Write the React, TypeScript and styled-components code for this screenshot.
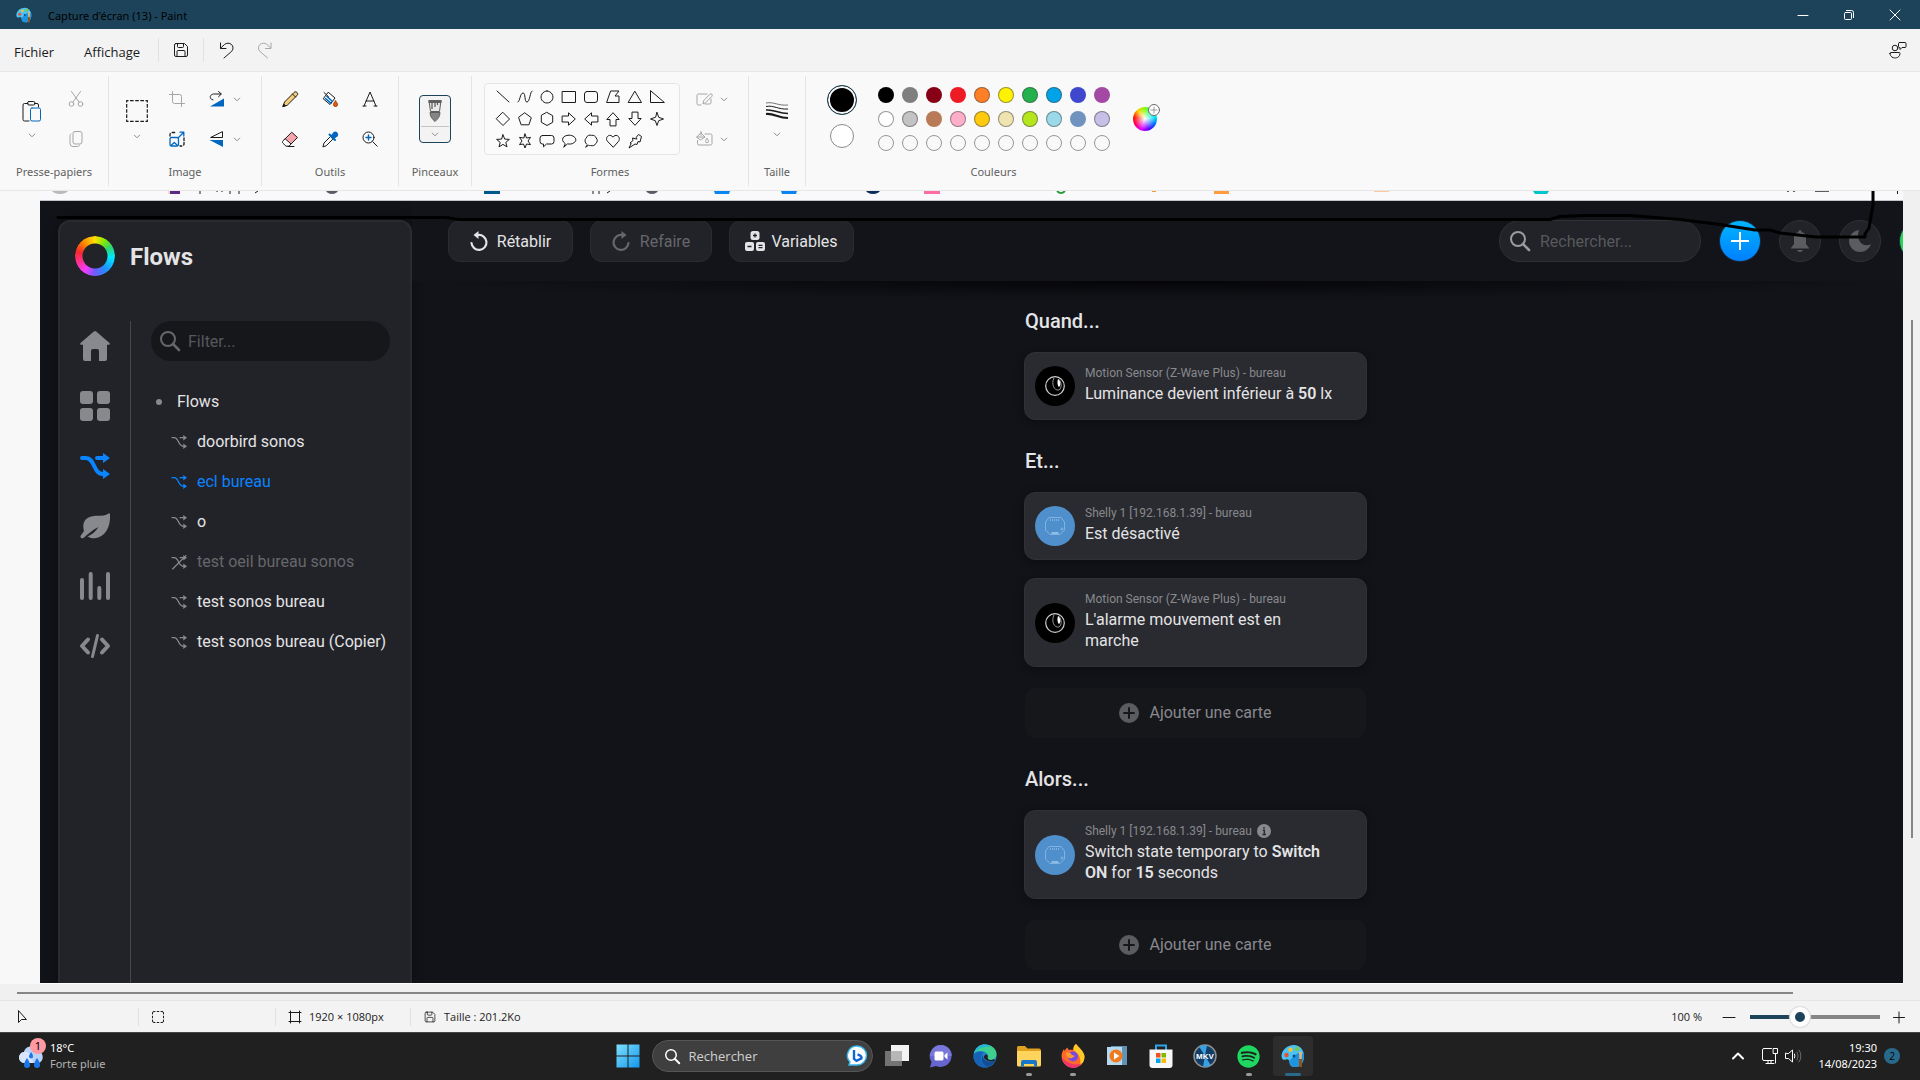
import React from 'react';
import styled, { createGlobalStyle, css } from 'styled-components';
import { FaSpotify } from 'react-icons/fa6';

const GlobalStyle = createGlobalStyle`
  *, *::before, *::after { box-sizing: border-box; }
  body { margin: 0; background: #202020; }
  button, input { font: inherit; color: inherit; }
  h1, h2, p, ul { margin: 0; padding: 0; }
  ul { list-style: none; }
`;

const segoe = "'Open Sans', 'Noto Sans', sans-serif";
const segoeSmall = "'Noto Sans', 'Open Sans', sans-serif";
const homey = "Roboto, 'Liberation Sans', sans-serif";

const bare = css`
  padding: 0;
  border: 0;
  background: none;
  display: flex;
  align-items: center;
  justify-content: center;
  flex: none;
`;

const Screen = styled.div`
  height: 100vh;
  display: flex;
  flex-direction: column;
  overflow: hidden;
  font: 12px/16px ${segoe};
  color: #1b1b1b;
  svg { display: block; flex: none; overflow: visible; }
`;

/* ---------- Window chrome ---------- */

const TitleBar = styled.header`
  flex: none;
  height: 29px;
  display: flex;
  align-items: center;
  gap: 16px;
  padding: 0 2px 0 16px;
  background: #1c4359;
  color: #000;
`;
const WindowTitle = styled.h1`
  flex: 1;
  font: 400 11px/16px ${segoeSmall};
  padding-top: 3px;
`;
const CaptionGroup = styled.div`
  display: flex;
`;
const CaptionButton = styled.button`
  ${bare}
  width: 46px;
  height: 28px;
  color: #fff;
`;
const MenuBar = styled.nav`
  flex: none;
  height: 43px;
  display: flex;
  align-items: center;
  padding-left: 2px;
  background: #f3f3f3;
  border-bottom: 1px solid #e7e7e7;
`;
const MenuItem = styled.button<{ $w: number }>`
  ${bare}
  width: ${p => p.$w}px;
  height: 32px;
  padding-top: 3px;
  font-size: 13px;
  margin-right: 4px;
`;
const MenuSep = styled.span`
  width: 1px;
  height: 24px;
  background: #e1e1e1;
`;
const MenuIcon = styled.button<{ $dim?: boolean }>`
  ${bare}
  width: ${p => (p.$dim ? 32 : 44)}px;
  height: 32px;
  color: ${p => (p.$dim ? '#a8a8a8' : '#1b1b1b')};
`;
const Spacer = styled.span`
  flex: 1;
`;

/* ---------- Ribbon ---------- */

const Ribbon = styled.div`
  flex: none;
  display: flex;
  height: 119px;
  padding: 4px 0;
  background: #f9f9f9;
  border-bottom: 1px solid #e7e7e7;
`;
const Group = styled.section<{ $w: number; $last?: boolean }>`
  width: ${p => p.$w}px;
  padding-top: 3px;
  display: flex;
  flex-direction: column;
  border-right: ${p => (p.$last ? 0 : 1)}px solid #e4e4e4;
`;
const GroupBody = styled.div<{ $pad: number; $gap?: number }>`
  height: 80px;
  display: flex;
  align-items: center;
  gap: ${p => p.$gap ?? 0}px;
  padding-left: ${p => p.$pad}px;
`;
const GroupLabel = styled.p`
  padding-top: 5px;
  text-align: center;
  font: 11px/16px ${segoeSmall};
  color: #5f5f5f;
`;
const TallButton = styled.button`
  ${bare}
  flex-direction: column;
  gap: 12px;
  width: 40px;
  height: 80px;
`;
const Cells = styled.div<{ $cols: number }>`
  display: grid;
  grid-template-columns: repeat(${p => p.$cols}, 40px);
  grid-auto-rows: 40px;
`;
const CellButton = styled.button<{ $dim?: boolean }>`
  ${bare}
  color: ${p => (p.$dim ? '#a5a5a5' : '#1b1b1b')};
`;
const SplitStack = styled.div`
  width: 56px;
  display: grid;
  grid-auto-rows: 40px;
`;
const SplitButton = styled(CellButton)`
  gap: 8px;
`;
const BrushButton = styled.button`
  ${bare}
  flex-direction: column;
  justify-content: space-between;
  width: 32px;
  height: 48px;
  margin: auto;
  border: 1px solid #1c4359;
  border-radius: 4px;
  background: #f3f3f3;
`;
const BrushTop = styled.span`
  height: 31px;
  width: 28px;
  display: flex;
  align-items: center;
  justify-content: center;
  border-bottom: 1px solid #c4c4c4;
`;
const BrushBottom = styled.span`
  height: 15px;
  display: flex;
  align-items: center;
`;
const Gallery = styled.div`
  display: grid;
  grid-template-columns: repeat(8, 22px);
  grid-auto-rows: 22px;
  padding: 2px 7px;
  width: 196px;
  flex: none;
  border: 1px solid #e5e5e5;
  border-radius: 4px;
  background: #fbfbfb;
`;
const ShapeButton = styled.button`
  ${bare}
`;
const ActiveColours = styled.div`
  width: 44px;
  display: flex;
  flex-direction: column;
  align-items: center;
  gap: 9px;
  padding-bottom: 5px;
`;
const ActiveColour = styled.button<{ $color: string; $on?: boolean }>`
  padding: 0;
  width: ${p => (p.$on ? 30 : 24)}px;
  height: ${p => (p.$on ? 30 : 24)}px;
  border-radius: 50%;
  background: ${p => p.$color};
  border: 1px solid ${p => (p.$on ? '#1c4359' : '#8a8a8a')};
  box-shadow: ${p => (p.$on ? 'inset 0 0 0 2px #f9f9f9' : 'none')};
`;
const Palette = styled.div`
  display: grid;
  grid-template-columns: repeat(10, 24px);
  grid-auto-rows: 24px;
  place-items: center;
`;
const Swatch = styled.button<{ $color?: string; $ring?: boolean }>`
  padding: 0;
  width: 16px;
  height: 16px;
  border-radius: 50%;
  background: ${p => p.$color ?? 'transparent'};
  border: 1px solid ${p => (p.$ring ? 'rgba(70, 70, 70, 0.55)' : 'transparent')};
`;
const WheelSlot = styled.span`
  width: 42px;
  display: flex;
  justify-content: center;
`;
const WheelButton = styled.button`
  position: relative;
  padding: 0;
  border: 0;
  width: 24px;
  height: 24px;
  border-radius: 50%;
  background:
    radial-gradient(circle, #fff 0, rgba(255, 255, 255, 0) 62%),
    conic-gradient(#7cff00, #00ff80, #00e5ff, #0066ff, #5a00ff, #e600ff, #ff0066, #ff1a00, #ffd000, #7cff00);
`;
const WheelPlus = styled.span`
  position: absolute;
  top: -3px;
  right: -3px;
`;

/* ---------- Workspace ---------- */

const Workspace = styled.main`
  flex: 1;
  min-height: 0;
  display: flex;
  background: #f8f8f8;
  padding-left: 40px;
`;
const Canvas = styled.div`
  position: relative;
  flex: 1;
  min-width: 0;
  overflow: hidden;
  display: flex;
  flex-direction: column;
  background: #121318;
  border-bottom: 1px solid #fff;
  font-family: ${homey};
  color: #e4e4e6;
`;
const VScroll = styled.div`
  width: 17px;
  background: #f0f0f0;
  display: flex;
  justify-content: center;
  padding: 129px 0 146px;
`;
const VThumb = styled.span`
  width: 2px;
  background: #868686;
`;
const TabStrip = styled.div`
  flex: none;
  height: 10px;
  background: #f9f9fb;
  border-bottom: 1px solid #c4c4c8;
`;
const StrokeLayer = styled.svg`
  position: absolute;
  top: 0;
  left: 0;
  width: 100%;
  height: 60px;
  pointer-events: none;
  z-index: 3;
`;
const FlowApp = styled.div`
  flex: 1;
  min-height: 0;
  display: flex;
  padding-left: 18px;
`;

const Sidebar = styled.aside`
  width: 354px;
  flex: none;
  margin-top: 19px;
  display: flex;
  flex-direction: column;
  background: #222328;
  border: 2px solid #2a2b30;
  border-bottom: 0;
  border-radius: 12px 12px 0 0;
  box-shadow: 0 0 12px rgba(0, 0, 0, 0.4);
`;
const Brand = styled.div`
  height: 99px;
  padding: 14px 0 0 15px;
  display: flex;
  gap: 15px;
`;
const BrandName = styled.h2`
  padding-top: 1px;
  font-size: 24px;
  line-height: 40px;
  font-weight: 700;
`;
const Ring = styled.span`
  width: 40px;
  height: 40px;
  border-radius: 50%;
  background: conic-gradient(#ffe000, #8be800 30deg, #2fd66a 60deg, #00eaff 95deg, #1e90ff 140deg, #6f5bff 180deg, #f23cff 215deg, #ff2f7d 255deg, #f52a2a 285deg, #ff8a00 320deg, #ffe000);
  mask: radial-gradient(circle, transparent 12px, #000 13px);
`;
const SideBody = styled.div`
  flex: 1;
  display: flex;
`;
const Rail = styled.nav`
  flex: none;
  width: 71px;
  display: flex;
  flex-direction: column;
  gap: 10px;
  border-right: 1px solid #47484c;
`;
const RailLink = styled.a<{ $on?: boolean }>`
  height: 50px;
  display: flex;
  align-items: center;
  justify-content: center;
  color: ${p => (p.$on ? '#0a84ff' : '#88898d')};
`;
const SideList = styled.div`
  flex: 1;
  min-width: 0;
  padding: 0 20px;
`;
const SearchField = styled.label<{ $dark?: boolean }>`
  display: flex;
  align-items: center;
  gap: ${p => (p.$dark ? 8 : 10)}px;
  height: ${p => (p.$dark ? 40 : 42)}px;
  width: ${p => (p.$dark ? 'auto' : '202px')};
  padding: 0 ${p => (p.$dark ? 9 : 10)}px;
  border-radius: 21px;
  background: ${p => (p.$dark ? '#16171b' : '#222328')};
  border: ${p => (p.$dark ? 0 : 1)}px solid #303136;
  color: ${p => (p.$dark ? '#66676b' : '#9a9b9e')};
`;
const SearchInput = styled.input`
  flex: 1;
  min-width: 0;
  padding: 2px 0 0;
  border: 0;
  outline: 0;
  background: none;
  font-size: 16px;
  line-height: 20px;
  color: #e4e4e6;
  &::placeholder { color: #57585c; opacity: 1; }
`;
const FlowRow = styled.a<{ $tone?: 'on' | 'off' | 'root' }>`
  display: flex;
  align-items: center;
  gap: ${p => (p.$tone === 'root' ? 15 : 10)}px;
  height: 40px;
  padding: 2px 0 0 ${p => (p.$tone === 'root' ? 5 : 20)}px;
  font-size: 16px;
  line-height: 20px;
  white-space: nowrap;
  text-decoration: none;
  color: ${p => (p.$tone === 'on' ? '#0a84ff' : p.$tone === 'off' ? '#66676b' : '#e4e4e6')};
  svg { color: ${p => (p.$tone === 'on' ? '#0a84ff' : '#88898d')}; }
`;
const Bullet = styled.span`
  width: 6px;
  height: 6px;
  border-radius: 50%;
  background: #88898d;
`;
const FlowRows = styled.ul`
  padding-top: 20px;
`;

const Main = styled.div`
  flex: 1;
  min-width: 0;
  display: flex;
  flex-direction: column;
  overflow: hidden;
`;
const Toolbar = styled.div`
  flex: none;
  height: 80px;
  padding: 19px 0 0 36px;
  display: flex;
  align-items: flex-start;
  gap: 17px;
  background: #13141a;
`;
const ToolButton = styled.button<{ $w: number; $gap: number; $dim?: boolean }>`
  ${bare}
  gap: ${p => p.$gap}px;
  width: ${p => p.$w}px;
  height: 42px;
  border: 1px solid #2b2c31;
  border-radius: 12px;
  background: #222328;
  font-size: 16px;
  line-height: 20px;
  color: ${p => (p.$dim ? '#66676b' : '#e4e4e6')};
`;
const ToolText = styled.span`
  padding-top: 2px;
`;
const ToolRight = styled.div`
  margin: 0 -38px 0 auto;
  flex: none;
  display: flex;
  gap: 18px;
`;
const RoundButton = styled.button<{ $kind?: 'add' | 'user' }>`
  ${bare}
  width: 42px;
  height: 42px;
  border-radius: 50%;
  border: 1px solid ${p => (p.$kind ? '#1a2c40' : '#303136')};
  background: ${p =>
    p.$kind === 'add' ? 'linear-gradient(#00b4ff, #0080ff)' : p.$kind === 'user' ? '#2bd45b' : '#222328'};
  color: ${p => (p.$kind ? '#fff' : '#5b5c60')};
`;
const Editor = styled.div`
  flex: 1;
  display: flex;
  justify-content: center;
  padding: 28px 0 0 76px;
  background: radial-gradient(ellipse 50% 18px at 50% 0, #050507 0, #0c0d11 55%, rgba(18, 19, 24, 0) 100%) no-repeat;
`;
const Column = styled.div`
  width: 343px;
  display: flex;
  flex-direction: column;
  gap: 29px;
`;
const StepTitle = styled.h2`
  padding-left: 1px;
  margin-bottom: 19px;
  font-size: 20px;
  line-height: 24px;
  font-weight: 500;
`;
const CardStack = styled.div`
  display: flex;
  flex-direction: column;
  gap: 18px;
`;
const Card = styled.article`
  display: flex;
  align-items: center;
  gap: 10px;
  padding: 0 30px 0 10px;
  border: 1px solid #303136;
  border-radius: 11px;
  background: #2a2b30;
  box-shadow: 0 2px 8px rgba(0, 0, 0, 0.35);
`;
const CardBody = styled.div`
  padding: 12px 0 15px;
`;
const Device = styled.span<{ $blue?: boolean }>`
  flex: none;
  width: 40px;
  height: 40px;
  border-radius: 50%;
  display: flex;
  align-items: center;
  justify-content: center;
  background: ${p => (p.$blue ? '#4f8fcb' : '#000')};
`;
const CardMeta = styled.p`
  display: flex;
  align-items: center;
  gap: 5px;
  height: 16px;
  font-size: 12px;
  color: #88898d;
`;
const CardText = styled.p`
  margin-top: 2px;
  font-size: 16px;
  line-height: 21px;
  b { font-weight: 600; }
`;
const AddCard = styled.button`
  ${bare}
  gap: 10px;
  width: 341px;
  height: 50px;
  margin: 3px auto 0;
  border-radius: 10px;
  background: #16171b;
  font-size: 16px;
  color: #88898d;
`;

/* ---------- Bottom bars ---------- */

const HScroll = styled.div`
  flex: none;
  height: 17px;
  padding: 8px 127px 0 17px;
  background: #f0f0f0;
  border-bottom: 1px solid #e6e6e6;
`;
const HThumb = styled.div`
  height: 2px;
  background: #868686;
`;
const StatusBar = styled.footer`
  flex: none;
  height: 31px;
  display: flex;
  align-items: center;
  padding-top: 1px;
  background: #f3f3f3;
  font-size: 11px;
`;
const StatusCell = styled.div<{ $w: number; $last?: boolean }>`
  width: ${p => p.$w}px;
  height: 18px;
  display: flex;
  align-items: center;
  gap: 8px;
  padding-left: 13px;
  border-right: ${p => (p.$last ? 0 : 1)}px solid #e1e1e1;
`;
const ZoomBox = styled.div`
  margin-left: auto;
  display: flex;
  align-items: center;
  padding-right: 6px;
`;
const ZoomButton = styled.button`
  ${bare}
  width: 30px;
  height: 24px;
`;
const ZoomLabel = styled.label`
  margin-right: 12px;
`;
const ZoomSlider = styled.input`
  appearance: none;
  width: 130px;
  height: 20px;
  margin: 0 4px 0 6px;
  background: linear-gradient(90deg, #1c4359 38%, #868686 38%) center / 100% 4px no-repeat;
  &::-webkit-slider-thumb {
    appearance: none;
    width: 20px;
    height: 20px;
    border-radius: 50%;
    border: 5px solid #fff;
    background: #1c4359;
    box-shadow: 0 0 1px 1px #dcdcdc;
  }
`;
const Taskbar = styled.footer`
  flex: none;
  height: 48px;
  display: grid;
  grid-template-columns: 1fr auto 1fr;
  align-items: center;
  background: #202020;
  box-shadow: inset 0 1px 0 #454545;
  color: #fff;
`;
const Weather = styled.button`
  ${bare}
  justify-self: start;
  gap: 7px;
  margin-left: 19px;
  text-align: left;
  font: 11px/16px ${segoeSmall};
`;
const WeatherPic = styled.span`
  position: relative;
`;
const WeatherBadge = styled.span`
  position: absolute;
  top: -5px;
  right: -3px;
  width: 16px;
  height: 16px;
  border-radius: 50%;
  background: #ff99a4;
  color: #000;
  text-align: center;
`;
const Line = styled.span<{ $faint?: boolean }>`
  display: block;
  color: ${p => (p.$faint ? '#b4b4b4' : '#fff')};
`;
const Dock = styled.div`
  display: flex;
  align-items: center;
  gap: 4px;
`;
const DockButton = styled.button<{ $on?: boolean; $dot?: boolean }>`
  ${bare}
  position: relative;
  width: 40px;
  height: 40px;
  border-radius: 4px;
  background: ${p => (p.$on ? '#2d2d2d' : 'none')};
  &::after {
    content: '';
    position: absolute;
    bottom: 0;
    left: 50%;
    transform: translateX(-50%);
    width: ${p => (p.$on ? 16 : 6)}px;
    height: 3px;
    border-radius: 2px;
    background: ${p => (p.$on ? '#286a8c' : p.$dot ? '#9a9a9a' : 'none')};
  }
`;
const DockSearch = styled.label`
  width: 221px;
  height: 32px;
  display: flex;
  align-items: center;
  gap: 9px;
  padding: 0 5px 0 12px;
  border: 1px solid #565656;
  border-radius: 16px;
  background: #3f3f3f;
`;
const DockInput = styled.input`
  flex: 1;
  min-width: 0;
  padding: 0;
  border: 0;
  outline: 0;
  background: none;
  font-size: 13px;
  &::placeholder { color: #d0d0d0; opacity: 1; }
`;
const Tray = styled.div`
  justify-self: end;
  display: flex;
  align-items: center;
  padding-right: 20px;
`;
const TrayButton = styled.button<{ $w: number }>`
  ${bare}
  width: ${p => p.$w}px;
  height: 40px;
`;
const Clock = styled.button`
  ${bare}
  display: block;
  margin: 0 7px 0 14px;
  font: 11px/16px ${segoeSmall};
  text-align: right;
`;
const Badge = styled.span`
  width: 16px;
  height: 16px;
  border-radius: 50%;
  background: #286a8c;
  color: #000;
  font-size: 10px;
  text-align: center;
`;

/* ---------- Drawings ---------- */

type IconProps = { s?: number; box?: number; sw?: number; color?: string; fill?: string; children: React.ReactNode };
const Svg = ({ s = 16, box, sw = 1, color = 'currentColor', fill = 'none', children }: IconProps) => (
  <svg width={s} height={s} viewBox={`0 0 ${box ?? s} ${box ?? s}`} fill={fill} stroke={color} strokeWidth={sw} strokeLinecap="round" strokeLinejoin="round" aria-hidden="true">
    {children}
  </svg>
);

const Chevron = () => (
  <svg width="8" height="5" viewBox="0 0 8 5" fill="none" stroke="#8c8c8c" aria-hidden="true"><path d="M1 .8 4 3.800 7 .8" /></svg>
);
const SaveIcon = ({ s = 16 }: { s?: number }) => (
  <Svg s={s} box={16}><path d="M3 1.500h8.500l3 3V13a1.500 1.500 0 0 1-1.500 1.500H3A1.500 1.500 0 0 1 1.500 13V3A1.500 1.500 0 0 1 3 1.500ZM4.500 1.500v3A1 1 0 0 0 5.500 5.500h4a1 1 0 0 0 1-1v-3M4 14.500V9.500A1 1 0 0 1 5 8.500h6a1 1 0 0 1 1 1v5" /></Svg>
);
const UndoIcon = () => (
  <Svg><path d="M2.500 1v5.500H8M2.800 6 6.500 2.500c2-1.700 5-1.800 7 0s2 5 .1 6.900L6 16" /></Svg>
);
const RedoIcon = () => (
  <Svg><path d="M15 1v5.500H9.500M14.700 6 11 2.500c-2-1.700-5-1.800-7 0s-2 5-.1 6.900L11.500 16" /></Svg>
);
const PaintLogo = ({ s = 16 }: { s?: number }) => (
  <svg width={s} height={s} viewBox="0 0 24 24" aria-hidden="true">
    <path d="M13 1C6 1 .5 6.500.5 12c0 3.500 2.500 4.500 4.500 3.500s3.500.5 3.500 2.500c0 3 2 5 5.500 5 6 0 9-5 9-11S19 1 13 1Z" fill="#4cc3f7" />
    <path d="M8.500 18c0-3 2-3 3.500-5s5-6 11-3c.5 8-4 13-9 13-3.500 0-5.500-2-5.500-5Z" fill="#1f93e0" />
    <circle cx="5.500" cy="11" r="2.200" fill="#e8502f" /><circle cx="9.500" cy="5.800" r="2.200" fill="#f6c02d" />
    <circle cx="16" cy="5" r="2.200" fill="#7ac943" /><circle cx="13" cy="12" r="1.500" fill="#0b4f86" />
    <path d="M18 8h3l-.4 7h-2.200Z" fill="#e9b872" /><path d="M18 15h3v8h-3Z" fill="#8b5522" />
  </svg>
);
const MagnifierIcon = ({ s = 20, sw = 2 }: { s?: number; sw?: number }) => (
  <Svg s={s} box={20} sw={sw}><circle cx="8" cy="8" r="7" /><path d="m13 13 6 6" strokeWidth={sw * 1.3} /></Svg>
);

const PasteIcon = () => (
  <Svg s={20}><path d="M6 2.500H2.500A1.500 1.500 0 0 0 1 4v14.500A1.500 1.500 0 0 0 2.500 20H7M12.500 2.500H15A1.500 1.500 0 0 1 16.500 4V6" /><rect x="5.500" y=".5" width="7.500" height="3.500" rx="1.500" /><rect x="8.500" y="7" width="10" height="13" rx="1.500" stroke="#0067c0" fill="#f9f9f9" /></Svg>
);
const CutIcon = () => (
  <Svg><circle cx="3.500" cy="13" r="2.300" /><circle cx="12.500" cy="13" r="2.300" /><path d="M3.500.5 11 11M12.500.5 5 11" /></Svg>
);
const CopyIcon = () => (
  <Svg><rect x="5" y=".5" width="9" height="12.500" rx="2" /><path d="M3 3C2 3.500 2 4 2 5v7.500a3 3 0 0 0 3 3h4.500c1 0 1.500 0 2-1" /></Svg>
);
const SelectIcon = () => (
  <svg width="22" height="22" viewBox="0 0 22 22" fill="none" stroke="#1b1b1b" strokeWidth="1.200" aria-hidden="true"><rect x=".7" y=".7" width="20.600" height="20.600" strokeDasharray="3.600 1.550" strokeDashoffset="1.800" /></svg>
);
const SmallSelectIcon = () => (
  <Svg s={12}><path d="M.5 3V2A1.500 1.500 0 0 1 2 .5h1M9 .5h1A1.500 1.500 0 0 1 11.500 2v1M11.500 9v1a1.500 1.500 0 0 1-1.500 1.500H9M3 11.500H2A1.500 1.500 0 0 1 .5 10V9M5.200.5h1.600M5.200 11.500h1.600M.5 5.200v1.600M11.500 5.200v1.600" /></Svg>
);
const CropIcon = () => (
  <Svg><path d="M.5 3.500h10a2 2 0 0 1 2 2v10M3.500.5v10a2 2 0 0 0 2 2h10" /></Svg>
);
const ResizeIcon = () => (
  <Svg><path d="M1 5V3.500A2 2 0 0 1 3 1.500h3M15 7v6a2 2 0 0 1-2 2h-2" strokeDasharray="2.500 2" strokeWidth="1.300" /><rect x="1" y="6.500" width="8.500" height="8.500" rx="1.500" stroke="#0067c0" strokeWidth="1.300" /><path d="m2 14.500 3.300-3 3.300 3M9.500 6.500l5-5M11 1.200h3.800V5" stroke="#0067c0" strokeWidth="1.300" /></Svg>
);
const RotateIcon = () => (
  <Svg><path d="M9.500.5 12.300 3 9.500 5.800M12 3H5.500C2 3 1 5 1.300 6.500c.2 1.500 1.200 2 2.700 2.300" /><path d="M15 7.500V15.500H1Z" fill="#0067c0" stroke="none" /></Svg>
);
const FlipIcon = () => (
  <Svg><path d="M13.500 1v5.500H2Z" /><path d="M14 9v7L.5 9Z" fill="#0067c0" stroke="none" /></Svg>
);
const PencilIcon = () => (
  <Svg><path d="M1 15.300 2.500 11 12 1.500c1-1 2-1 3 0s1 2 0 3L5.500 14Z" fill="#f2cd7c" /><path d="m10.500 3 3 3" /><path d="m1 15.300.8-2.300 1.500 1.500Z" fill="#1b1b1b" /></Svg>
);
const BucketIcon = () => (
  <Svg><path d="M6.500 1.500 13 7l-5 6.500L1.500 8Z" fill="#fff" /><path d="m5 5.500 5.500 5M3.500 7.500 9 12.300" stroke="#0067c0" strokeWidth="1.600" /><path d="m2 1.500 4.500 4.200" /><path d="M13.500 10c1.200 1.500 2 2.400 2 3.500a2 2 0 0 1-4 0c0-1.100.8-2 2-3.500Z" fill="#e8590c" stroke="#a33a00" /></Svg>
);
const TextIcon = () => (
  <Svg><path d="M2 15 8 1l6 14M4 10h8M1 15h3M12 15h3" /></Svg>
);
const EraserIcon = () => (
  <Svg><path d="M10 1.500 15.500 6.500 8.500 13.500 3 8.500Z" fill="#f7a5ac" /><path d="m3.500 8 5.500 5-2 2.200H4L.8 12c-.5-.7-.4-1.400 0-2Z" fill="#fff" /><path d="M6 15.500h6" /></Svg>
);
const DropperIcon = () => (
  <Svg><path d="M1 15.500 2 12l6.500-6.500 2.500 2.500L4.500 14.500Z" /><path d="m7.500 3.500 5.500 5.500M9.500 5.500 12 2a2 2 0 0 1 2.800 2.800L11 7.500Z" fill="#0067c0" stroke="#0067c0" strokeWidth="2" /></Svg>
);
const ZoomInIcon = () => (
  <Svg><circle cx="6.500" cy="6.500" r="5.500" /><path d="m10.700 10.700 4.500 4.500" /><path d="M6.500 4v5M4 6.500h5" stroke="#0067c0" strokeWidth="1.400" /></Svg>
);
const BrushIcon = () => (
  <svg width="16" height="24" viewBox="0 0 16 24" aria-hidden="true">
    <path d="M2 1.500h12l-1.500 11h-9Z" fill="#e9e9e9" stroke="#5e5e5e" /><path d="M1.500 1h13v3h-13Z" fill="#5e5e5e" /><path d="M5 4v6M8 4v4M10.500 4v2" stroke="#5e5e5e" strokeWidth="1.300" />
    <path d="M3 13.500h10c0 4.500-2.500 6.500-5 9-2.500-2.500-5-4.500-5-9Z" fill="#858585" stroke="#5e5e5e" />
  </svg>
);
const SizeIcon = () => (
  <svg width="22" height="18" viewBox="0 0 22 18" fill="none" stroke="#1b1b1b" aria-hidden="true">
    <path d="M0 1c8-1.500 12 3 22 2" strokeWidth=".6" /><path d="M0 4.500c8-1.500 12 3.200 22 2.500" strokeWidth="1" /><path d="M0 8c8-1 12 3.500 22 3.500" strokeWidth="1.500" /><path d="M0 12c8-1 12 4 22 4" strokeWidth="2.200" />
  </svg>
);
const OutlineIcon = () => (
  <Svg><path d="M11 3H2.500A1.500 1.500 0 0 0 1 4.500v8A1.500 1.500 0 0 0 2.500 14H5M9 13h4.500a1.500 1.500 0 0 0 1.500-1.500V8M7 12.500l.8-3L14 3.200c1.500-1 3 .5 2 2L9.800 11.500Z" /></Svg>
);
const FillIcon = () => (
  <Svg><path d="M1.500 9.500v3A1.500 1.500 0 0 0 3 14h11.500a1.500 1.500 0 0 0 1.500-1.500v-8A1.500 1.500 0 0 0 14.500 3H9M5 2l4 4-4.500 3L1 6.500ZM5 .5v4M1 6h7.500M11 7.500c1 1.200 1.500 2 1.500 2.700a1.500 1.500 0 0 1-3 0c0-.7.500-1.500 1.500-2.700Z" /></Svg>
);

const shapes: [string, string][] = [
  ['Ligne', 'M2 2l12 11'],
  ['Courbe', 'M1 13C3 13 3 4 6 4s1 9 4 9 3-11 5-11'],
  ['Ovale', 'M8 2a6 6 0 1 0 .01 0Z'],
  ['Rectangle', 'M1.500 2.500h13v11h-13Z'],
  ['Rectangle arrondi', 'M4 2.500h8a2.500 2.500 0 0 1 2.500 2.500v6a2.500 2.500 0 0 1-2.500 2.500H4A2.500 2.500 0 0 1 1.500 11V5A2.500 2.500 0 0 1 4 2.500Z'],
  ['Polygone', 'M6 2h8l-4 5h4v6.500H2Z'],
  ['Triangle', 'M8 2.500 14.500 13.500h-13Z'],
  ['Triangle rectangle', 'M1.500 2v11.500H15Z'],
  ['Losange', 'M8 1.500 14.500 8 8 14.500 1.500 8Z'],
  ['Pentagone', 'M8 2l6.300 4.700-2.400 7.100H4.100L1.700 6.700Z'],
  ['Hexagone', 'M8 1.500l5.700 3.200v6.600L8 14.500l-5.700-3.200V4.700Z'],
  ['Flèche droite', 'M1.500 5h6V1.800L14.300 8l-6.800 6.200V11h-6Z'],
  ['Flèche gauche', 'M14.500 5h-6V1.800L1.700 8l6.800 6.200V11h6Z'],
  ['Flèche haut', 'M5 14.500v-6H1.800L8 1.700l6.200 6.800H11v6Z'],
  ['Flèche bas', 'M5 1.500v6H1.800L8 14.300l6.200-6.800H11v-6Z'],
  ['Étoile à 4 branches', 'M8 1.500 9.700 6.300 14.500 8 9.700 9.700 8 14.500 6.300 9.700 1.500 8 6.300 6.300Z'],
  ['Étoile à 5 branches', 'M8 1.800l1.700 4.300 4.700.3-3.600 3 1.200 4.500L8 11.400l-4 2.500 1.200-4.500-3.600-3 4.700-.3Z'],
  ['Étoile à 6 branches', 'M8 1l1.500 4 4-.6L11 8l2.500 3.600-4-.6L8 15l-1.500-4-4 .6L5 8 2.500 4.400l4 .6Z'],
  ['Bulle rectangulaire', 'M3.500 2.500h9a2.500 2.500 0 0 1 2.500 2.500v3.500A2.500 2.500 0 0 1 12.500 11H7.500L4.500 13.800V11h-1A2.500 2.500 0 0 1 1 8.500V5a2.500 2.500 0 0 1 2.500-2.500Z'],
  ['Bulle ovale', 'M4 10.500C-1 7 2 2.200 8 2.200s9 5 5 7.500c-2 1.500-4 1.500-6.500 1.200L3 14Z'],
  ['Bulle de pensée', 'M4 11.500C1.500 9.500 1.500 6.500 3.200 5 4 2.500 6.500 1.700 8.500 2.300c2.500-.3 4 .9 4.700 2.700 1.600 1.500 1.300 4-.2 5.300-.8 2-3.400 3-5.500 2.200-1 .2-1.500.1-2-.2L3 14Z'],
  ['Cœur', 'M8 14 2.400 8.200c-3-4 2.600-8.400 5.600-4 3-4.400 8.600 0 5.600 4Z'],
  ['Éclair', 'M9.500 4 11.500 1.500 14.500 3.500 13 9l-2-.5-1 3-2-.5L2 15l2.200-4.500-1.200-.5L6 7.500 5.500 5l4 1Z'],
];

const swatches: [string | undefined, boolean][] = [
  ['#000000', false], ['#7f7f7f', false], ['#880015', false], ['#ed1c24', false], ['#ff7f27', true],
  ['#fff200', true], ['#22b14c', true], ['#00a2e8', true], ['#3f48cc', false], ['#a349a4', false],
  ['#ffffff', true], ['#c3c3c3', true], ['#b97a57', false], ['#ffaec9', true], ['#ffc90e', true],
  ['#efe4b0', true], ['#b5e61d', true], ['#99d9ea', true], ['#7092be', false], ['#c8bfe7', true],
  ...Array.from({ length: 10 }, (): [undefined, boolean] => [undefined, true]),
];

const FlowIcon = ({ s = 30, off }: { s?: number; off?: boolean }) => (
  <svg width={s} height={s} viewBox="0 0 30 30" fill="none" stroke="currentColor" strokeWidth={s > 20 ? 4 : 2.4} strokeLinecap="round" aria-hidden="true">
    <path d="M2 7h4c9 0 7 16 17 16M17 7h6" />
    <path d="m23 2 7 5-7 5ZM23 18l7 5-7 5Z" fill="currentColor" stroke="none" />
    {off && <path d="M3 28 28 3" />}
  </svg>
);
const HomeIcon = () => (
  <svg width="30" height="30" viewBox="0 0 30 30" fill="currentColor" aria-hidden="true"><path d="M13.800.5q1.200-1 2.400 0L29.500 12q1 1.800-1 1.800H27V28q0 2-2 2h-6V20q0-2-2-2h-4q-2 0-2 2v10H5q-2 0-2-2V13.800H1.500q-2 0-1-1.800Z" /></svg>
);
const GridIcon = () => (
  <svg width="30" height="30" viewBox="0 0 30 30" fill="currentColor" aria-hidden="true">{[[0, 0], [17, 0], [0, 17], [17, 17]].map(([x, y]) => <rect key={`${x}-${y}`} x={x} y={y} width="13" height="13" rx="3" />)}</svg>
);
const LeafIcon = () => (
  <svg width="30" height="30" viewBox="0 0 30 30" fill="currentColor" aria-hidden="true"><path d="M4 20C1 8 9 5 17 4.800c5 0 9 0 11.500-2.300q1.200-.6 1.500.8c1 14-6 23-15 24-4 .3-5.500-1-7.500-1.800 4-1.500 8-5 11-9.500-6 3-10 6.500-15 11q-2 1-3-.8-.5-1.200.7-2.200Z" /></svg>
);
const BarsIcon = () => (
  <svg width="30" height="30" viewBox="0 0 30 30" stroke="currentColor" strokeWidth="4" strokeLinecap="round" aria-hidden="true"><path d="M2 9v18M10.700 3v24M19.300 17v10M28 3v24" /></svg>
);
const CodeIcon = () => (
  <Svg s={30} sw={3}><path d="m8 8.500-6 6.500 6 6.500M22 8.500l6 6.500-6 6.500" strokeWidth="4" /><path d="M17.500 4.500 12.500 25.500" /></Svg>
);
const TurnIcon = ({ flip }: { flip?: boolean }) => (
  <svg width="18" height="20" viewBox="0 0 18 20" aria-hidden="true"><g transform={flip ? 'translate(18 0) scale(-1 1)' : undefined}><path d="M1.500 12A7.500 7.500 0 1 0 8 4" fill="none" stroke="currentColor" strokeWidth="2.200" strokeLinecap="round" /><path d="M8.500 0v8L3.500 4Z" fill="currentColor" /></g></svg>
);
const VariablesIcon = () => (
  <svg width="20" height="20" viewBox="0 0 20 20" aria-hidden="true"><g fill="#e4e4e6"><rect x="5.500" y="0" width="9" height="9" rx="2.500" /><rect x="0" y="11" width="9" height="9" rx="2" /><rect x="11" y="11" width="9" height="9" rx="2" /></g><path d="M10 2.500v4M8 4.500h4M2.500 15.500h4M13.500 14.300h4M13.500 16.700h4" stroke="#222328" strokeWidth="1.300" /></svg>
);
const BellIcon = () => (
  <svg width="22" height="22" viewBox="0 0 22 22" fill="currentColor" aria-hidden="true"><path d="M11 0q1.500 0 1.500 2C16 3 17 5 17 8v6l3 4v.5H2V18l3-4V8c0-3 1-5 4.500-6Q9.500 0 11 0ZM8 20h6q-1 2-3 2t-3-2Z" /></svg>
);
const MoonIcon = () => (
  <svg width="22" height="22" viewBox="0 0 22 22" fill="currentColor" aria-hidden="true"><path d="M10 0C4 1 0 5.500 0 11a11 11 0 0 0 11 11c5 0 9.500-3.500 11-8-7 4.500-16-3-12-14Z" /></svg>
);
const SensorIcon = () => (
  <svg width="20" height="20" viewBox="0 0 20 20" fill="none" stroke="#cfcfcf" aria-hidden="true"><circle cx="10" cy="10" r="9.300" strokeWidth="1.200" /><path d="M9 2c-3 6 0 13 5 12 3-2 3-8-.5-11" strokeWidth=".7" /><path d="M13 3c3 2.500 3 6 1 8-1.500-1-2-5-1-8Z" fill="#fff" stroke="none" /></svg>
);
const RelayIcon = () => (
  <svg width="20" height="18" viewBox="0 0 20 18" fill="none" stroke="#8fbce4" strokeWidth=".8" aria-hidden="true"><path d="M4 .5h12L19.500 5v8L15 17.500H5L.5 13V5Z" /><path d="M5 3h10" strokeWidth="1.500" strokeDasharray="1 1" /><path d="M6.500 16h7" strokeWidth="2" /><circle cx="17" cy="12" r="1" /></svg>
);
const PlusDisc = () => (
  <svg width="20" height="20" viewBox="0 0 20 20" aria-hidden="true"><circle cx="10" cy="10" r="10" fill="#5b5c60" /><path d="M10 5v10M5 10h10" stroke="#16171b" strokeWidth="2" strokeLinecap="round" /></svg>
);
const InfoDisc = () => (
  <svg width="14" height="14" viewBox="0 0 14 14" aria-hidden="true"><circle cx="7" cy="7" r="7" fill="#88898d" /><path d="M5.800 6.200H7.300v4.300M5.500 10.500h3.500M7 3v1.700" stroke="#2a2b30" strokeWidth="1.400" fill="none" /></svg>
);

const StripScraps = () => (
  <svg width="100%" height="4" aria-hidden="true">
    <ellipse cx="20" cy="-1" rx="8" ry="4" fill="#b9b9be" /><path d="M128 0h4v3h-4Z" fill="#f6d9c4" /><path d="M130 0h10v3h-10Z" fill="#5b2a83" />
    <path d="M160 0v3M177 0v1M182 0v1M190 0v3M199 0v3M215 2l3-2M553 0v3M559 0v3M567 2l3-2" stroke="#1b1b1b" />
    <ellipse cx="292" cy="-1" rx="6" ry="4" fill="#5b5c66" /><path d="M444 0h16v3h-16Z" fill="#00578a" /><ellipse cx="612" cy="-1" rx="6" ry="4" fill="#5b5c66" />
    <path d="M674 0h16l-1 3h-14ZM741 0h16l-1 3h-14Z" fill="#0a84f0" /><ellipse cx="833" cy="-1" rx="7" ry="4" fill="#0b2f55" /><path d="M884 0h16v3h-16Z" fill="#ff6ba5" />
    <path d="M1014 0h16v3h-16Z" fill="#fff" /><path d="M1017 0q4 4 8 0" stroke="#2b9b3d" strokeWidth="2" fill="none" /><path d="M1112 0h4v1h-4Z" fill="#f0a030" />
    <path d="M1174 0h15v3h-15Z" fill="#ff9a3d" /><path d="M1334 0h15v1h-15Z" fill="#ffc9a0" /><path d="M1493 0h16l-2 3h-12Z" fill="#00c4cc" />
    <path d="M1747 0h2v1h-2ZM1753 0h2v1h-2ZM1775 0h14v1h-14Z" fill="#5b5c66" /><path d="M1857 0h1v3h-1Z" fill="#1b1b1b" />
  </svg>
);

const WeatherIcon = () => (
  <svg width="24" height="26" viewBox="0 0 24 26" aria-hidden="true"><path d="M6 20a5.500 5.500 0 0 1-1-11C6 3 15 1 18 8c7 0 8 11 1 12Z" fill="#b9d2f7" /><path d="M6 20a5.500 5.500 0 0 1-1-11c5-1 8 3 9 11Z" fill="#d7e4fb" /><path d="M8 15c2 3 3 5 3 7a3 3 0 0 1-6 0c0-2 1-4 3-7ZM18 15c2 3 3 5 3 7a3 3 0 0 1-6 0c0-2 1-4 3-7ZM12 9c1.500 2 2 3 2 4.500a2 2 0 0 1-4 0C10 12 11 11 12 9Z" fill="#1c76e8" /></svg>
);
const StartIcon = () => (
  <svg width="24" height="24" viewBox="0 0 24 24" aria-hidden="true"><defs><linearGradient id="win" x1="0" y1="0" x2="1" y2="1"><stop stopColor="#7fe0ff" /><stop offset="1" stopColor="#1297ea" /></linearGradient></defs><path d="M.5.5h11v11H.5ZM12.500.5h11v11h-11ZM.5 12.500h11v11H.5ZM12.500 12.500h11v11h-11Z" fill="url(#win)" /></svg>
);
const BingIcon = () => (
  <svg width="20" height="22" viewBox="0 0 20 22" aria-hidden="true"><path d="M10 1a9.500 9.500 0 0 1 0 19H2l1-3A9.500 9.500 0 0 1 10 1Z" fill="#fff" stroke="#38b6ee" strokeWidth="1.400" /><path d="M7 5v9l2.500 1.800 5-2.500c.5-2-2-3.300-4-4" fill="none" stroke="#1268d3" strokeWidth="2.400" /></svg>
);
const TaskViewIcon = () => (
  <svg width="24" height="22" viewBox="0 0 24 22" aria-hidden="true"><path d="M6 0h18v16H6Z" fill="#f3f3f3" /><path d="M0 6h17v15H0Z" fill="#7c7c7c" fillOpacity=".9" /><path d="M6 6h11v10H6Z" fill="#b7b7b7" /></svg>
);
const ChatIcon = () => (
  <svg width="24" height="24" viewBox="0 0 24 24" aria-hidden="true"><path d="M12 1a11 11 0 1 1-5 21L1 23.500 2.500 18A11 11 0 0 1 12 1Z" fill="#6765cf" /><path d="M12 1A11 11 0 0 1 23 12H1A11 11 0 0 1 12 1Z" fill="#8583df" fillOpacity=".6" /><rect x="5.500" y="7.500" width="9" height="9" rx="1.500" fill="#fff" /><path d="m15.500 11 3-2.500v7l-3-2.500Z" fill="#fff" /></svg>
);
const EdgeIcon = () => (
  <svg width="24" height="24" viewBox="0 0 24 24" aria-hidden="true"><circle cx="12" cy="12" r="11.500" fill="#1d7fd3" /><path d="M1 9C3 3 7 .5 12 .5c6 0 11.500 4 11.500 9.500 0 4-3 6-6 6-2 0-3-.5-2.500-2C17 9 8 4 1 9Z" fill="#3fcf8e" /><path d="M1 9C3 3 7 .5 12 .5c3 0 4 1 6 2.500C10 2 5 5 1 9Z" fill="#27b6d8" /><path d="M9 11c-3 5 0 10 6 12C6 25 0 18 .5 12 2 8 7 7 11 8.500 10 9 9.500 10 9 11Z" fill="#1663b5" /><path d="M10 11c-1 4 4 8.500 12 6-2 3-4 5-7 6-6-2-8-8-5-12Z" fill="#144d94" /><path d="M14 10.500c1.500 1.500 0 3 1 4.500 1 1 4 1.500 6 0l1 2c-4 1-8 0-10-2s-1-4.500 2-4.500Z" fill="#202020" /></svg>
);
const FolderIcon = () => (
  <svg width="24" height="22" viewBox="0 0 24 22" aria-hidden="true"><path d="M0 2.500Q0 1 1.500 1H8l2.500 2.500H22q2 0 2 2V8H0Z" fill="#e0a020" /><path d="M0 6h24v14q0 1.500-1.500 1.500h-21Q0 21.500 0 20Z" fill="#ffd45c" /><path d="M4 21.500V17q0-2 2-2h12q2 0 2 2v4.500h-3V19H7v2.500Z" fill="#1976c9" /></svg>
);
const FirefoxIcon = () => (
  <svg width="24" height="24" viewBox="0 0 24 24" aria-hidden="true"><path d="M15 0c2 2 3 3.500 4.500 5 3 3 4 6 4 8A11.500 11.500 0 1 1 3 5l.5 2L6 3.500 8 6c2-.5 3-.5 4.500 0C12 4 13 1.500 15 0Z" fill="#ff6a2b" /><path d="M15 0c2 2 3 3.500 4.500 5 3 3 4 6 4 8 0 4-2 7-5 9 2-6 1-11-6-16C12 4 13 1.500 15 0Z" fill="#ffc928" /><path d="M1 14c1 6 6 10 11 10 4 0 7-2 9-5-4 2-8 2-12 0-4-1-6-4-8-5Z" fill="#f0356b" /><circle cx="12" cy="12.500" r="5" fill="#7a4ae0" /><path d="M5 9c3-1 5 0 6 2l3 1-3 2c-4 1-6-2-6-5Z" fill="#ff9a2e" /></svg>
);
const MediaIcon = () => (
  <svg width="20" height="20" viewBox="0 0 20 20" aria-hidden="true"><path d="M4 0h16v19H4Z" fill="#5f93b8" /><path d="M0 1h15v18H0Z" fill="#b8d8ec" /><circle cx="9" cy="10" r="6.500" fill="#f07a1c" /><path d="m7 6.500 5.500 3.500L7 13.500Z" fill="#fff" /></svg>
);
const StoreIcon = () => (
  <svg width="24" height="24" viewBox="0 0 24 24" aria-hidden="true"><path d="M7 6V1.500h10V6" fill="none" stroke="#2ea3e8" strokeWidth="2" /><path d="M.5 5.500h23V21q0 3-3 3h-17q-3 0-3-3Z" fill="#f7f7f7" /><path d="M7 9h4.500v4.500H7Z" fill="#f25022" /><path d="M12.500 9H17v4.500h-4.500Z" fill="#7fba00" /><path d="M7 14.500h4.500V19H7Z" fill="#00a4ef" /><path d="M12.500 14.500H17V19h-4.500Z" fill="#ffb900" /></svg>
);
const MkvIcon = () => (
  <svg width="24" height="24" viewBox="0 0 24 24" aria-hidden="true"><circle cx="12" cy="12" r="11" fill="#123d66" stroke="#8f8f8f" strokeWidth="1.500" /><path d="M12 12 6 2.500A11 11 0 0 1 14 1.500ZM12 12l6 9.500a11 11 0 0 1-8 1Z" fill="#3aa0e0" /><text x="12" y="14.500" fontFamily="Liberation Sans, sans-serif" fontSize="8" fontWeight="700" fill="#fff" textAnchor="middle">MKV</text></svg>
);

/* ---------- Page ---------- */

const rows: { name: string; tone?: 'on' | 'off' }[] = [
  { name: 'doorbird sonos' },
  { name: 'ecl bureau', tone: 'on' },
  { name: 'o' },
  { name: 'test oeil bureau sonos', tone: 'off' },
  { name: 'test sonos bureau' },
  { name: 'test sonos bureau (Copier)' },
];
const rail: [string, React.ReactNode][] = [
  ['Accueil', <HomeIcon />],
  ['Appareils', <GridIcon />],
  ['Flows', <FlowIcon />],
  ['Énergie', <LeafIcon />],
  ['Insights', <BarsIcon />],
  ['Script', <CodeIcon />],
];
const dock: { name: string; icon: React.ReactNode; dot?: boolean; on?: boolean }[] = [
  { name: 'Vue des tâches', icon: <TaskViewIcon /> },
  { name: 'Conversation', icon: <ChatIcon /> },
  { name: 'Edge', icon: <EdgeIcon /> },
  { name: 'Explorateur', icon: <FolderIcon />, dot: true },
  { name: 'Firefox', icon: <FirefoxIcon />, dot: true },
  { name: 'Lecteur', icon: <MediaIcon /> },
  { name: 'Store', icon: <StoreIcon /> },
  { name: 'MKV', icon: <MkvIcon /> },
  { name: 'Spotify', icon: <FaSpotify size={23} color="#1ed760" />, dot: true },
  { name: 'Paint', icon: <PaintLogo s={24} />, on: true },
];

const DeviceCard = ({ relay, meta, info, children }: { relay?: boolean; meta: string; info?: boolean; children: React.ReactNode }) => (
  <Card>
    <Device $blue={relay}>{relay ? <RelayIcon /> : <SensorIcon />}</Device>
    <CardBody>
      <CardMeta>{meta}{info && <InfoDisc />}</CardMeta>
      <CardText>{children}</CardText>
    </CardBody>
  </Card>
);
const AddCardButton = () => <AddCard type="button"><PlusDisc />Ajouter une carte</AddCard>;

export default function App() {
  return (
    <Screen>
      <GlobalStyle />
      <TitleBar>
        <PaintLogo />
        <WindowTitle>Capture d'écran (13) - Paint</WindowTitle>
        <CaptionGroup>
          <CaptionButton aria-label="Réduire"><Svg s={10}><path d="M0 5.500h10" /></Svg></CaptionButton>
          <CaptionButton aria-label="Restaurer"><Svg s={10}><rect x=".5" y="2.500" width="7" height="7" rx="1" /><path d="M2.500.5h5a2 2 0 0 1 2 2v5" /></Svg></CaptionButton>
          <CaptionButton aria-label="Fermer"><Svg s={10}><path d="m0 0 10 10M10 0 0 10" /></Svg></CaptionButton>
        </CaptionGroup>
      </TitleBar>
      <MenuBar>
        <MenuItem $w={64}>Fichier</MenuItem>
        <MenuItem $w={84}>Affichage</MenuItem>
        <MenuSep />
        <MenuIcon aria-label="Enregistrer"><SaveIcon /></MenuIcon>
        <MenuSep />
        <MenuIcon aria-label="Annuler"><UndoIcon /></MenuIcon>
        <MenuIcon aria-label="Rétablir" $dim><RedoIcon /></MenuIcon>
        <Spacer />
        <MenuIcon aria-label="Commentaires">
          <Svg s={18}><circle cx="6" cy="7" r="2.800" /><path d="M1 12.500c0-1 .5-1 1-1h8c.5 0 1 0 1 1 0 6-10 6-10 0ZM10.500 1.500h5.500a1 1 0 0 1 1 1v3a1 1 0 0 1-1 1h-3l-2 2v-2h-.5a1 1 0 0 1-1-1v-3a1 1 0 0 1 1-1Z" /></Svg>
        </MenuIcon>
      </MenuBar>

      <Ribbon>
        <Group $w={109}>
          <GroupBody $pad={12} $gap={4}>
            <TallButton aria-label="Coller"><PasteIcon /><Chevron /></TallButton>
            <Cells $cols={1}>
              <CellButton $dim aria-label="Couper"><CutIcon /></CellButton>
              <CellButton $dim aria-label="Copier"><CopyIcon /></CellButton>
            </Cells>
          </GroupBody>
          <GroupLabel>Presse-papiers</GroupLabel>
        </Group>
        <Group $w={153}>
          <GroupBody $pad={8}>
            <TallButton aria-label="Sélection"><SelectIcon /><Chevron /></TallButton>
            <Cells $cols={1}>
              <CellButton $dim aria-label="Rogner"><CropIcon /></CellButton>
              <CellButton aria-label="Redimensionner"><ResizeIcon /></CellButton>
            </Cells>
            <SplitStack>
              <SplitButton aria-label="Rotation"><RotateIcon /><Chevron /></SplitButton>
              <SplitButton aria-label="Retourner"><FlipIcon /><Chevron /></SplitButton>
            </SplitStack>
          </GroupBody>
          <GroupLabel>Image</GroupLabel>
        </Group>
        <Group $w={137}>
          <GroupBody $pad={8}>
            <Cells $cols={3}>
              <CellButton aria-label="Crayon"><PencilIcon /></CellButton>
              <CellButton aria-label="Remplissage"><BucketIcon /></CellButton>
              <CellButton aria-label="Texte"><TextIcon /></CellButton>
              <CellButton aria-label="Gomme"><EraserIcon /></CellButton>
              <CellButton aria-label="Pipette"><DropperIcon /></CellButton>
              <CellButton aria-label="Loupe"><ZoomInIcon /></CellButton>
            </Cells>
          </GroupBody>
          <GroupLabel>Outils</GroupLabel>
        </Group>
        <Group $w={73}>
          <GroupBody $pad={0}>
            <BrushButton aria-label="Pinceaux">
              <BrushTop><BrushIcon /></BrushTop>
              <BrushBottom><Chevron /></BrushBottom>
            </BrushButton>
          </GroupBody>
          <GroupLabel>Pinceaux</GroupLabel>
        </Group>
        <Group $w={277}>
          <GroupBody $pad={12} $gap={4}>
            <Gallery>
              {shapes.map(([name, d]) => (
                <ShapeButton key={name} aria-label={name}><Svg><path d={d} /></Svg></ShapeButton>
              ))}
            </Gallery>
            <SplitStack>
              <SplitButton $dim aria-label="Contour"><OutlineIcon /><Chevron /></SplitButton>
              <SplitButton $dim aria-label="Remplir la forme"><FillIcon /><Chevron /></SplitButton>
            </SplitStack>
          </GroupBody>
          <GroupLabel>Formes</GroupLabel>
        </Group>
        <Group $w={57}>
          <GroupBody $pad={8}>
            <TallButton aria-label="Taille"><SizeIcon /><Chevron /></TallButton>
          </GroupBody>
          <GroupLabel>Taille</GroupLabel>
        </Group>
        <Group $w={375} $last>
          <GroupBody $pad={14} $gap={10}>
            <ActiveColours>
              <ActiveColour $color="#000" $on aria-label="Couleur 1" />
              <ActiveColour $color="#fff" aria-label="Couleur 2" />
            </ActiveColours>
            <Palette>
              {swatches.map(([color, ring], i) => (
                <Swatch key={i} $color={color} $ring={ring} aria-label={`Nuance ${i + 1}`} />
              ))}
            </Palette>
            <WheelSlot>
              <WheelButton aria-label="Modifier les couleurs">
                <WheelPlus><Svg s={12}><circle cx="6" cy="6" r="5.500" fill="#fff" stroke="#6b6b6b" /><path d="M6 3v6M3 6h6" stroke="#9a9a9a" /></Svg></WheelPlus>
              </WheelButton>
            </WheelSlot>
          </GroupBody>
          <GroupLabel>Couleurs</GroupLabel>
        </Group>
      </Ribbon>

      <Workspace>
        <Canvas>
          <TabStrip><StripScraps /></TabStrip>
          <StrokeLayer fill="none" stroke="#000" strokeWidth="3" strokeLinecap="round" strokeLinejoin="round" aria-hidden="true">
            <path d="M18 26.500H406L418 28.500H1510L1520 25.500L1545 24.500H1590L1640 28.500L1680 33.500L1715 39H1730L1740 42L1776 46H1825V43L1829 37L1833 14V0" />
          </StrokeLayer>
          <FlowApp>
            <Sidebar>
              <Brand><Ring /><BrandName>Flows</BrandName></Brand>
              <SideBody>
                <Rail>
                  {rail.map(([name, icon]) => (
                    <RailLink key={name} href="#" aria-label={name} $on={name === 'Flows'}>{icon}</RailLink>
                  ))}
                </Rail>
                <SideList>
                  <SearchField $dark>
                    <MagnifierIcon />
                    <SearchInput placeholder="Filter..." aria-label="Filter" />
                  </SearchField>
                  <FlowRows>
                    <li><FlowRow href="#" $tone="root"><Bullet />Flows</FlowRow></li>
                    {rows.map(r => (
                      <li key={r.name}><FlowRow href="#" $tone={r.tone}><FlowIcon s={16} off={r.tone === 'off'} />{r.name}</FlowRow></li>
                    ))}
                  </FlowRows>
                </SideList>
              </SideBody>
            </Sidebar>
            <Main>
              <Toolbar>
                <ToolButton $w={125} $gap={9}><TurnIcon /><ToolText>Rétablir</ToolText></ToolButton>
                <ToolButton $w={122} $gap={10} $dim><TurnIcon flip /><ToolText>Refaire</ToolText></ToolButton>
                <ToolButton $w={125} $gap={6}><VariablesIcon /><ToolText>Variables</ToolText></ToolButton>
                <ToolRight>
                  <SearchField>
                    <MagnifierIcon />
                    <SearchInput placeholder="Rechercher..." aria-label="Rechercher" />
                  </SearchField>
                  <RoundButton $kind="add" aria-label="Ajouter"><Svg s={18} sw={2}><path d="M9 0v18M0 9h18" strokeLinecap="butt" /></Svg></RoundButton>
                  <RoundButton aria-label="Notifications"><BellIcon /></RoundButton>
                  <RoundButton aria-label="Mode sombre"><MoonIcon /></RoundButton>
                  <RoundButton $kind="user" aria-label="Compte" />
                </ToolRight>
              </Toolbar>
              <Editor>
                <Column>
                  <section>
                    <StepTitle>Quand...</StepTitle>
                    <CardStack>
                      <DeviceCard meta="Motion Sensor (Z-Wave Plus) - bureau">Luminance devient inférieur à <b>50</b> lx</DeviceCard>
                    </CardStack>
                  </section>
                  <section>
                    <StepTitle>Et...</StepTitle>
                    <CardStack>
                      <DeviceCard relay meta="Shelly 1 [192.168.1.39] - bureau">Est désactivé</DeviceCard>
                      <DeviceCard meta="Motion Sensor (Z-Wave Plus) - bureau">L'alarme mouvement est en marche</DeviceCard>
                      <AddCardButton />
                    </CardStack>
                  </section>
                  <section>
                    <StepTitle>Alors...</StepTitle>
                    <CardStack>
                      <DeviceCard relay info meta="Shelly 1 [192.168.1.39] - bureau">Switch state temporary to <b>Switch</b> <b>ON</b> for <b>15</b> seconds</DeviceCard>
                      <AddCardButton />
                    </CardStack>
                  </section>
                </Column>
              </Editor>
            </Main>
          </FlowApp>
        </Canvas>
        <VScroll><VThumb /></VScroll>
      </Workspace>

      <HScroll><HThumb /></HScroll>
      <StatusBar>
        <StatusCell $w={139}><Svg s={14}><path d="M5.500 1v11.500l3-3H13Z" /></Svg></StatusCell>
        <StatusCell $w={137}><SmallSelectIcon /></StatusCell>
        <StatusCell $w={135}><Svg s={12}><path d="M1.500 0v12M10.500 0v12M0 1.500h12M0 10.500h12" /></Svg>1920 × 1080px</StatusCell>
        <StatusCell $w={160} $last><SaveIcon s={12} />Taille : 201.2Ko</StatusCell>
        <ZoomBox>
          <ZoomLabel htmlFor="zoom">100 %</ZoomLabel>
          <ZoomButton aria-label="Zoom arrière"><Svg s={12}><path d="M0 6.500h12" /></Svg></ZoomButton>
          <ZoomSlider id="zoom" type="range" min={0} max={100} defaultValue={36} />
          <ZoomButton aria-label="Zoom avant"><Svg s={12}><path d="M.5 6.500h11M6 1v11" /></Svg></ZoomButton>
        </ZoomBox>
      </StatusBar>

      <Taskbar>
        <Weather>
          <WeatherPic><WeatherIcon /><WeatherBadge>1</WeatherBadge></WeatherPic>
          <span><Line>18°C</Line><Line $faint>Forte pluie</Line></span>
        </Weather>
        <Dock>
          <DockButton aria-label="Démarrer"><StartIcon /></DockButton>
          <DockSearch>
            <MagnifierIcon s={15} />
            <DockInput placeholder="Rechercher" aria-label="Rechercher dans Windows" />
            <BingIcon />
          </DockSearch>
          {dock.map(d => (
            <DockButton key={d.name} aria-label={d.name} $on={d.on} $dot={d.dot}>{d.icon}</DockButton>
          ))}
        </Dock>
        <Tray>
          <TrayButton $w={40} aria-label="Icônes cachées"><Svg s={10} sw={2}><path d="M0 7.500 5 2.500l5 5" /></Svg></TrayButton>
          <TrayButton $w={23} aria-label="Réseau"><Svg><path d="M9.500.5H2A1.500 1.500 0 0 0 .5 2v9A1.500 1.500 0 0 0 2 12.500h9.500M4 15.500h8M6 12.500v3M9 12.500v3M11.500.5h4v5h-4ZM13.500 5.500V15" /></Svg></TrayButton>
          <TrayButton $w={23} aria-label="Volume"><Svg><path d="M.5 5.500v5h3l4 3.500V2l-4 3.500ZM9.500 6q1 2 0 4" /><path d="M12 4q2.500 4 0 8M14 2q4 6 0 12" stroke="#6b6b6b" /></Svg></TrayButton>
          <Clock><Line>19:30</Line><Line>14/08/2023</Line></Clock>
          <Badge>2</Badge>
        </Tray>
      </Taskbar>
    </Screen>
  );
}
